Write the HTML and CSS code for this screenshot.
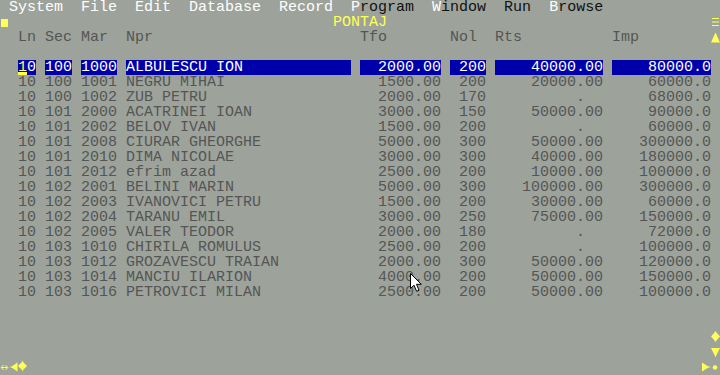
FILE: index.html
```html
<!DOCTYPE html>
<html>
<head>
<meta charset="utf-8">
<title>PONTAJ</title>
<link rel="stylesheet" href="styles.css">
</head>
<body>
<div class="screen">
  <div class="menu"><span class="lit"> System  File  Edit  Database  Record  P</span><span class="dim">rogram</span><span class="lit">  W</span><span class="dim">indow  Run  </span><span class="lit">B</span><span class="dim">rowse</span></div>

  <div class="row title">
    <span class="blk"></span>
    <span class="ttl">PONTAJ</span>
    <svg class="ico" viewBox="0 0 9 15"><rect x="1" y="3" width="7" height="1"/><rect x="1" y="6.5" width="7" height="1"/><rect x="1" y="10" width="7" height="1"/></svg>
  </div>

  <div class="row head">
    <div class="cols">
      <span>Ln</span><span>Sec</span><span>Mar</span><span>Npr</span><span>Tfo</span><span>Nol</span><span>Rts</span><span>Imp</span>
    </div>
    <svg class="ico" viewBox="0 0 9 15"><polygon points="4.5,2.5 9,12.5 0,12.5"/></svg>
  </div>

  <div class="browse">
    <div class="cols sel"><span><span class="cur">1</span>0</span><span>100</span><span>1000</span><span>ALBULESCU ION</span><span class="num">2000.00</span><span class="num">200</span><span class="num">40000.00</span><span class="num">80000.0</span></div>
    <div class="cols"><span>10</span><span>100</span><span>1001</span><span>NEGRU MIHAI</span><span class="num">1500.00</span><span class="num">200</span><span class="num">20000.00</span><span class="num">60000.0</span></div>
    <div class="cols"><span>10</span><span>100</span><span>1002</span><span>ZUB PETRU</span><span class="num">2000.00</span><span class="num">170</span><span class="num">.  </span><span class="num">68000.0</span></div>
    <div class="cols"><span>10</span><span>101</span><span>2000</span><span>ACATRINEI IOAN</span><span class="num">3000.00</span><span class="num">150</span><span class="num">50000.00</span><span class="num">90000.0</span></div>
    <div class="cols"><span>10</span><span>101</span><span>2002</span><span>BELOV IVAN</span><span class="num">1500.00</span><span class="num">200</span><span class="num">.  </span><span class="num">60000.0</span></div>
    <div class="cols"><span>10</span><span>101</span><span>2008</span><span>CIURAR GHEORGHE</span><span class="num">5000.00</span><span class="num">300</span><span class="num">50000.00</span><span class="num">300000.0</span></div>
    <div class="cols"><span>10</span><span>101</span><span>2010</span><span>DIMA NICOLAE</span><span class="num">3000.00</span><span class="num">300</span><span class="num">40000.00</span><span class="num">180000.0</span></div>
    <div class="cols"><span>10</span><span>101</span><span>2012</span><span>efrim azad</span><span class="num">2500.00</span><span class="num">200</span><span class="num">10000.00</span><span class="num">100000.0</span></div>
    <div class="cols"><span>10</span><span>102</span><span>2001</span><span>BELINI MARIN</span><span class="num">5000.00</span><span class="num">300</span><span class="num">100000.00</span><span class="num">300000.0</span></div>
    <div class="cols"><span>10</span><span>102</span><span>2003</span><span>IVANOVICI PETRU</span><span class="num">1500.00</span><span class="num">200</span><span class="num">30000.00</span><span class="num">60000.0</span></div>
    <div class="cols"><span>10</span><span>102</span><span>2004</span><span>TARANU EMIL</span><span class="num">3000.00</span><span class="num">250</span><span class="num">75000.00</span><span class="num">150000.0</span></div>
    <div class="cols"><span>10</span><span>102</span><span>2005</span><span>VALER TEODOR</span><span class="num">2000.00</span><span class="num">180</span><span class="num">.  </span><span class="num">72000.0</span></div>
    <div class="cols"><span>10</span><span>103</span><span>1010</span><span>CHIRILA ROMULUS</span><span class="num">2500.00</span><span class="num">200</span><span class="num">.  </span><span class="num">100000.0</span></div>
    <div class="cols"><span>10</span><span>103</span><span>1012</span><span>GROZAVESCU TRAIAN</span><span class="num">2000.00</span><span class="num">300</span><span class="num">50000.00</span><span class="num">120000.0</span></div>
    <div class="cols"><span>10</span><span>103</span><span>1014</span><span>MANCIU ILARION</span><span class="num">4000.00</span><span class="num">200</span><span class="num">50000.00</span><span class="num">150000.0</span></div>
    <div class="cols"><span>10</span><span>103</span><span>1016</span><span>PETROVICI MILAN</span><span class="num">2500.00</span><span class="num">200</span><span class="num">50000.00</span><span class="num">100000.0</span></div>
  </div>

  <div class="foot">
    <div class="row edge">
      <svg class="ico" viewBox="0 0 9 15"><polygon points="4.5,0.5 5,2 9,6.5 5,11 4.5,12.5 4,11 0,6.5 4,2"/></svg>
    </div>
    <div class="row edge">
      <svg class="ico" viewBox="0 0 9 15"><polygon points="0,3 9,3 5,11 4.5,12.5 4,11"/></svg>
    </div>
    <div class="row status">
      <div class="grp">
        <svg class="ico" viewBox="0 0 9 15"><path d="M1.5 7.5 H7.5 M3.5 5 L1.2 7.5 L3.5 10 M5.5 5 L7.8 7.5 L5.5 10" fill="none" stroke="#ffff55" stroke-width="1"/></svg>
        <svg class="ico" viewBox="0 0 9 15"><polygon points="0.5,7 3,6.2 8.5,2.5 8.5,11.5 3,7.8"/></svg>
        <svg class="ico" viewBox="0 0 9 15"><polygon points="4.5,0.3 5,2 9,6 5,10 4.5,11.7 4,10 0,6 4,2"/></svg>
      </div>
      <div class="grp">
        <svg class="ico" viewBox="0 0 9 15"><polygon points="0,2.5 6,6.2 9,7 6,7.8 0,11.5"/></svg>
        <svg class="ico" viewBox="0 0 9 15"><circle cx="4" cy="7.5" r="2.3"/></svg>
      </div>
    </div>
  </div>

  <svg class="mouse" viewBox="0 0 13 20"><path d="M0.5 0.5 L0.5 15.5 L4 12.2 L6.6 18.3 L9 17.3 L6.5 11.3 L11.3 11.3 Z" fill="#fff" stroke="#000" stroke-width="1" stroke-linejoin="miter"/></svg>
</div>
</body>
</html>
```

FILE: styles.css
```css
html, body {
  margin: 0;
  padding: 0;
  background: #9da39b;
}

.screen {
  position: relative;
  width: 720px;
  height: 375px;
  overflow: hidden;
  background: #9da39b;
  color: #555555;
  font-family: "Liberation Mono", "DejaVu Sans Mono", monospace;
  font-size: 15px;
  line-height: 15px;
  display: flex;
  flex-direction: column;
}

.row {
  height: 15px;
  display: flex;
  white-space: pre;
}

.menu {
  height: 15px;
  white-space: pre;
  flex: none;
}

.menu .lit { color: #ffffff; }
.menu .dim { color: #111111; }

.title {
  display: grid;
  grid-template-columns: 9px 1fr 9px;
}

.blk {
  width: 7px;
  height: 8px;
  margin: 4px 0 0 1px;
  background: #ffff55;
}

.ttl {
  color: #ffff55;
  text-align: center;
}

.ico {
  display: block;
  width: 9px;
  height: 15px;
  fill: #ffff55;
  flex: none;
}

.cols {
  display: grid;
  grid-template-columns: 18px 27px 36px 225px 81px 36px 108px 99px;
  column-gap: 9px;
  padding-left: 18px;
  width: 711px;
  height: 15px;
  box-sizing: border-box;
  flex: none;
}

.cols > span {
  white-space: pre;
  overflow: hidden;
}

.cols > .num { text-align: right; }

.browse {
  margin-top: 15px;
  display: flex;
  flex-direction: column;
}

.sel > span {
  background: #0000aa;
  color: #ffffff;
}

.cur {
  display: inline-block;
  height: 15px;
  vertical-align: top;
  color: #ffff55;
  background: linear-gradient(#ffff55, #ffff55) left bottom / 100% 3px no-repeat;
}

.foot {
  margin-top: auto;
  display: flex;
  flex-direction: column;
}

.edge { justify-content: flex-end; }

.status { justify-content: space-between; }

.grp { display: flex; }

.mouse {
  position: absolute;
  left: 410px;
  top: 273px;
  width: 13px;
  height: 20px;
}
```
